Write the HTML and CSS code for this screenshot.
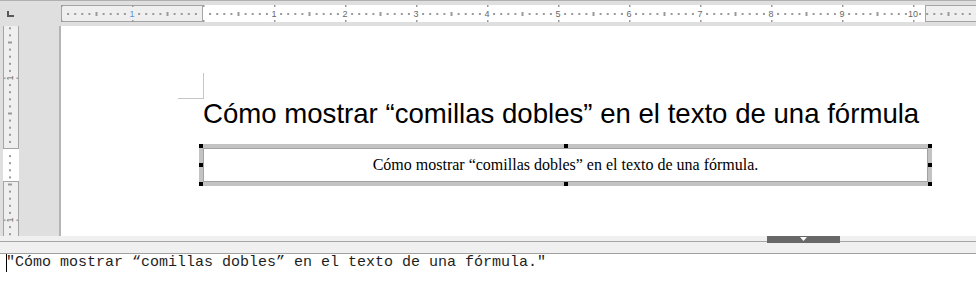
FILE: index.html
```html
<!DOCTYPE html>
<html lang="es">
<head>
<meta charset="utf-8">
<title>Fórmula</title>
<link rel="stylesheet" href="styles.css">
</head>
<body>
<div class="app">
  <div class="toprow">
    <div class="corner">
      <svg width="61" height="25" viewBox="0 0 61 25"><path d="M7 10h2v4h5v2H7z" fill="#585858"/></svg>
    </div>
    <svg class="hruler" width="915" height="25" viewBox="0 0 915 25">
      <defs>
        <pattern id="ht" patternUnits="userSpaceOnUse" x="142" y="0" width="71" height="25">
          <g fill="#9a9a9a">
            <rect x="6.1" y="12" width="2" height="2"/>
            <rect x="13.2" y="12" width="2" height="2"/>
            <rect x="20.3" y="12" width="2" height="2"/>
            <rect x="27.4" y="12" width="2" height="2"/>
            <rect x="34.5" y="11" width="2" height="4"/>
            <rect x="41.6" y="12" width="2" height="2"/>
            <rect x="48.7" y="12" width="2" height="2"/>
            <rect x="55.8" y="12" width="2" height="2"/>
            <rect x="62.9" y="12" width="2" height="2"/>
            <rect x="0" y="4" width="1.5" height="2"/>
            <rect x="0" y="19" width="1.5" height="2"/>
          </g>
        </pattern>
      </defs>
      <rect x="0" y="4" width="915" height="17" fill="#ffffff"/>
      <rect x="0.5" y="4.5" width="141" height="16" fill="#efefef" stroke="#a4a4a4"/>
      <rect x="864.5" y="4.5" width="60" height="16" fill="#efefef" stroke="#a4a4a4"/>
      <rect x="0" y="0" width="915" height="25" fill="url(#ht)"/>
      <g class="rnum" text-anchor="middle">
        <text class="rnum-active" x="71" y="16">1</text>
        <text x="213" y="16">1</text>
        <text x="284" y="16">2</text>
        <text x="355" y="16">3</text>
        <text x="426" y="16">4</text>
        <text x="497" y="16">5</text>
        <text x="568" y="16">6</text>
        <text x="639" y="16">7</text>
        <text x="710" y="16">8</text>
        <text x="781" y="16">9</text>
        <text x="852" y="16">10</text>
      </g>
    </svg>
  </div>

  <div class="mid">
    <div class="side">
      <svg class="vruler" width="16" height="210" viewBox="0 0 16 210">
        <defs>
          <pattern id="vt" patternUnits="userSpaceOnUse" x="0" y="123" width="16" height="71">
            <g fill="#9a9a9a">
              <rect x="6" y="6.1" width="2" height="2"/>
              <rect x="6" y="13.2" width="2" height="2"/>
              <rect x="6" y="20.3" width="2" height="2"/>
              <rect x="6" y="27.4" width="2" height="2"/>
              <rect x="5" y="34.5" width="4" height="2"/>
              <rect x="6" y="41.6" width="2" height="2"/>
              <rect x="6" y="48.7" width="2" height="2"/>
              <rect x="6" y="55.8" width="2" height="2"/>
              <rect x="6" y="62.9" width="2" height="2"/>
            </g>
          </pattern>
        </defs>
        <rect x="0" y="0" width="16" height="210" fill="#ffffff"/>
        <rect x="0.5" y="-1" width="15" height="123.5" fill="#efefef" stroke="#a4a4a4"/>
        <rect x="0.5" y="155.5" width="15" height="60" fill="#efefef" stroke="#a4a4a4"/>
        <rect x="0" y="0" width="16" height="210" fill="url(#vt)"/>
        <g fill="#9a9a9a">
          <rect x="1" y="51.5" width="1.5" height="1.5"/>
          <rect x="13.5" y="51.5" width="1.5" height="1.5"/>
          <rect x="1" y="193.5" width="1.5" height="1.5"/>
          <rect x="13.5" y="193.5" width="1.5" height="1.5"/>
        </g>
        <g class="rnum" text-anchor="middle">
          <text transform="translate(10 52) rotate(-90)">1</text>
          <text transform="translate(10 194) rotate(-90)">1</text>
        </g>
      </svg>
    </div>
    <div class="page">
      <div class="cropmark"></div>
      <h1 class="title">Cómo mostrar “comillas dobles” en el texto de una fórmula</h1>
      <div class="frame">
        <div class="formula">Cómo mostrar “comillas dobles” en el texto de una fórmula.</div>
        <span class="handle h-tl"></span>
        <span class="handle h-tc"></span>
        <span class="handle h-tr"></span>
        <span class="handle h-ml"></span>
        <span class="handle h-mr"></span>
        <span class="handle h-bl"></span>
        <span class="handle h-bc"></span>
        <span class="handle h-br"></span>
      </div>
    </div>
  </div>

  <div class="split">
    <div class="split-rule"></div>
    <div class="grip">
      <svg width="73" height="7" viewBox="0 0 73 7"><polygon points="33,1 40,1 36.5,5" fill="#ffffff"/></svg>
    </div>
  </div>

  <div class="editor"><span class="caret"></span>"Cómo mostrar “comillas dobles” en el texto de una fórmula."</div>
</div>
</body>
</html>
```

FILE: styles.css
```css
* { box-sizing: border-box; }

html, body {
  margin: 0;
  padding: 0;
  background: #ffffff;
}

body {
  width: 976px;
  height: 299px;
  overflow: hidden;
  font-family: "Liberation Sans", Arial, sans-serif;
}

.app {
  display: flex;
  flex-direction: column;
  width: 976px;
  height: 299px;
}

/* top ruler row */
.toprow {
  display: flex;
  height: 26px;
  flex: none;
  border-top: 1px solid #b0b0b0;
  background: #dfdfdf;
}

.corner {
  width: 61px;
  flex: none;
}

.corner svg,
.hruler,
.vruler {
  display: block;
}

.rnum {
  font-family: "Liberation Sans", Arial, sans-serif;
  font-size: 9px;
  fill: #676767;
}

.rnum .rnum-active {
  fill: #5b93d6;
}

/* middle area */
.mid {
  display: flex;
  height: 210px;
  flex: none;
}

.side {
  width: 61px;
  flex: none;
  background: #dfdfdf;
  border-right: 2px solid #b4b4b4;
  padding-left: 3px;
}

.page {
  flex: 1;
  background: #ffffff;
  padding: 47px 51px 0 142px;
}

.cropmark {
  width: 26px;
  height: 26px;
  margin-left: -25px;
  border-right: 1px solid #c6c6c6;
  border-bottom: 1px solid #c6c6c6;
}

.title {
  margin: 0;
  font-family: "Liberation Sans", Arial, sans-serif;
  font-weight: normal;
  font-size: 27.6px;
  line-height: 30px;
  color: #000000;
  white-space: nowrap;
}

.frame {
  position: relative;
  width: 733px;
  height: 42px;
  margin: 15px 0 0 -4px;
  padding: 4px;
  background: #c3c3c3;
}

.formula {
  height: 34px;
  border: 1px solid #a2a2a2;
  background: #ffffff;
  font-family: "Liberation Serif", "Times New Roman", serif;
  font-size: 16px;
  line-height: 32px;
  text-align: center;
  color: #000000;
  white-space: nowrap;
}

.handle {
  position: absolute;
  width: 4px;
  height: 4px;
  background: #000000;
}
.h-tl { top: 0; left: 0; }
.h-tc { top: 0; left: 50%; margin-left: -2px; }
.h-tr { top: 0; right: 0; }
.h-ml { top: 50%; left: 0; margin-top: -2px; }
.h-mr { top: 50%; right: 0; margin-top: -2px; }
.h-bl { bottom: 0; left: 0; }
.h-bc { bottom: 0; left: 50%; margin-left: -2px; }
.h-br { bottom: 0; right: 0; }

/* splitter */
.split {
  position: relative;
  height: 18px;
  flex: none;
  background: #f0f0f0;
  border-bottom: 1px solid #a0a0a0;
  padding-top: 5px;
}

.split-rule {
  height: 1px;
  background: #a6a6a6;
}

.grip {
  position: absolute;
  top: 0;
  left: 767px;
  width: 73px;
  height: 7px;
  background: #686868;
}

.grip svg {
  display: block;
}

/* formula editor */
.editor {
  flex: 1;
  background: #ffffff;
  padding-left: 6px;
  font-family: "Liberation Mono", "Courier New", monospace;
  font-size: 15px;
  line-height: 17px;
  color: #1e1e1e;
  white-space: pre;
}

.caret {
  display: inline-block;
  width: 0;
  height: 18px;
  margin-right: -1px;
  border-left: 1px solid #000000;
  vertical-align: top;
}
```
